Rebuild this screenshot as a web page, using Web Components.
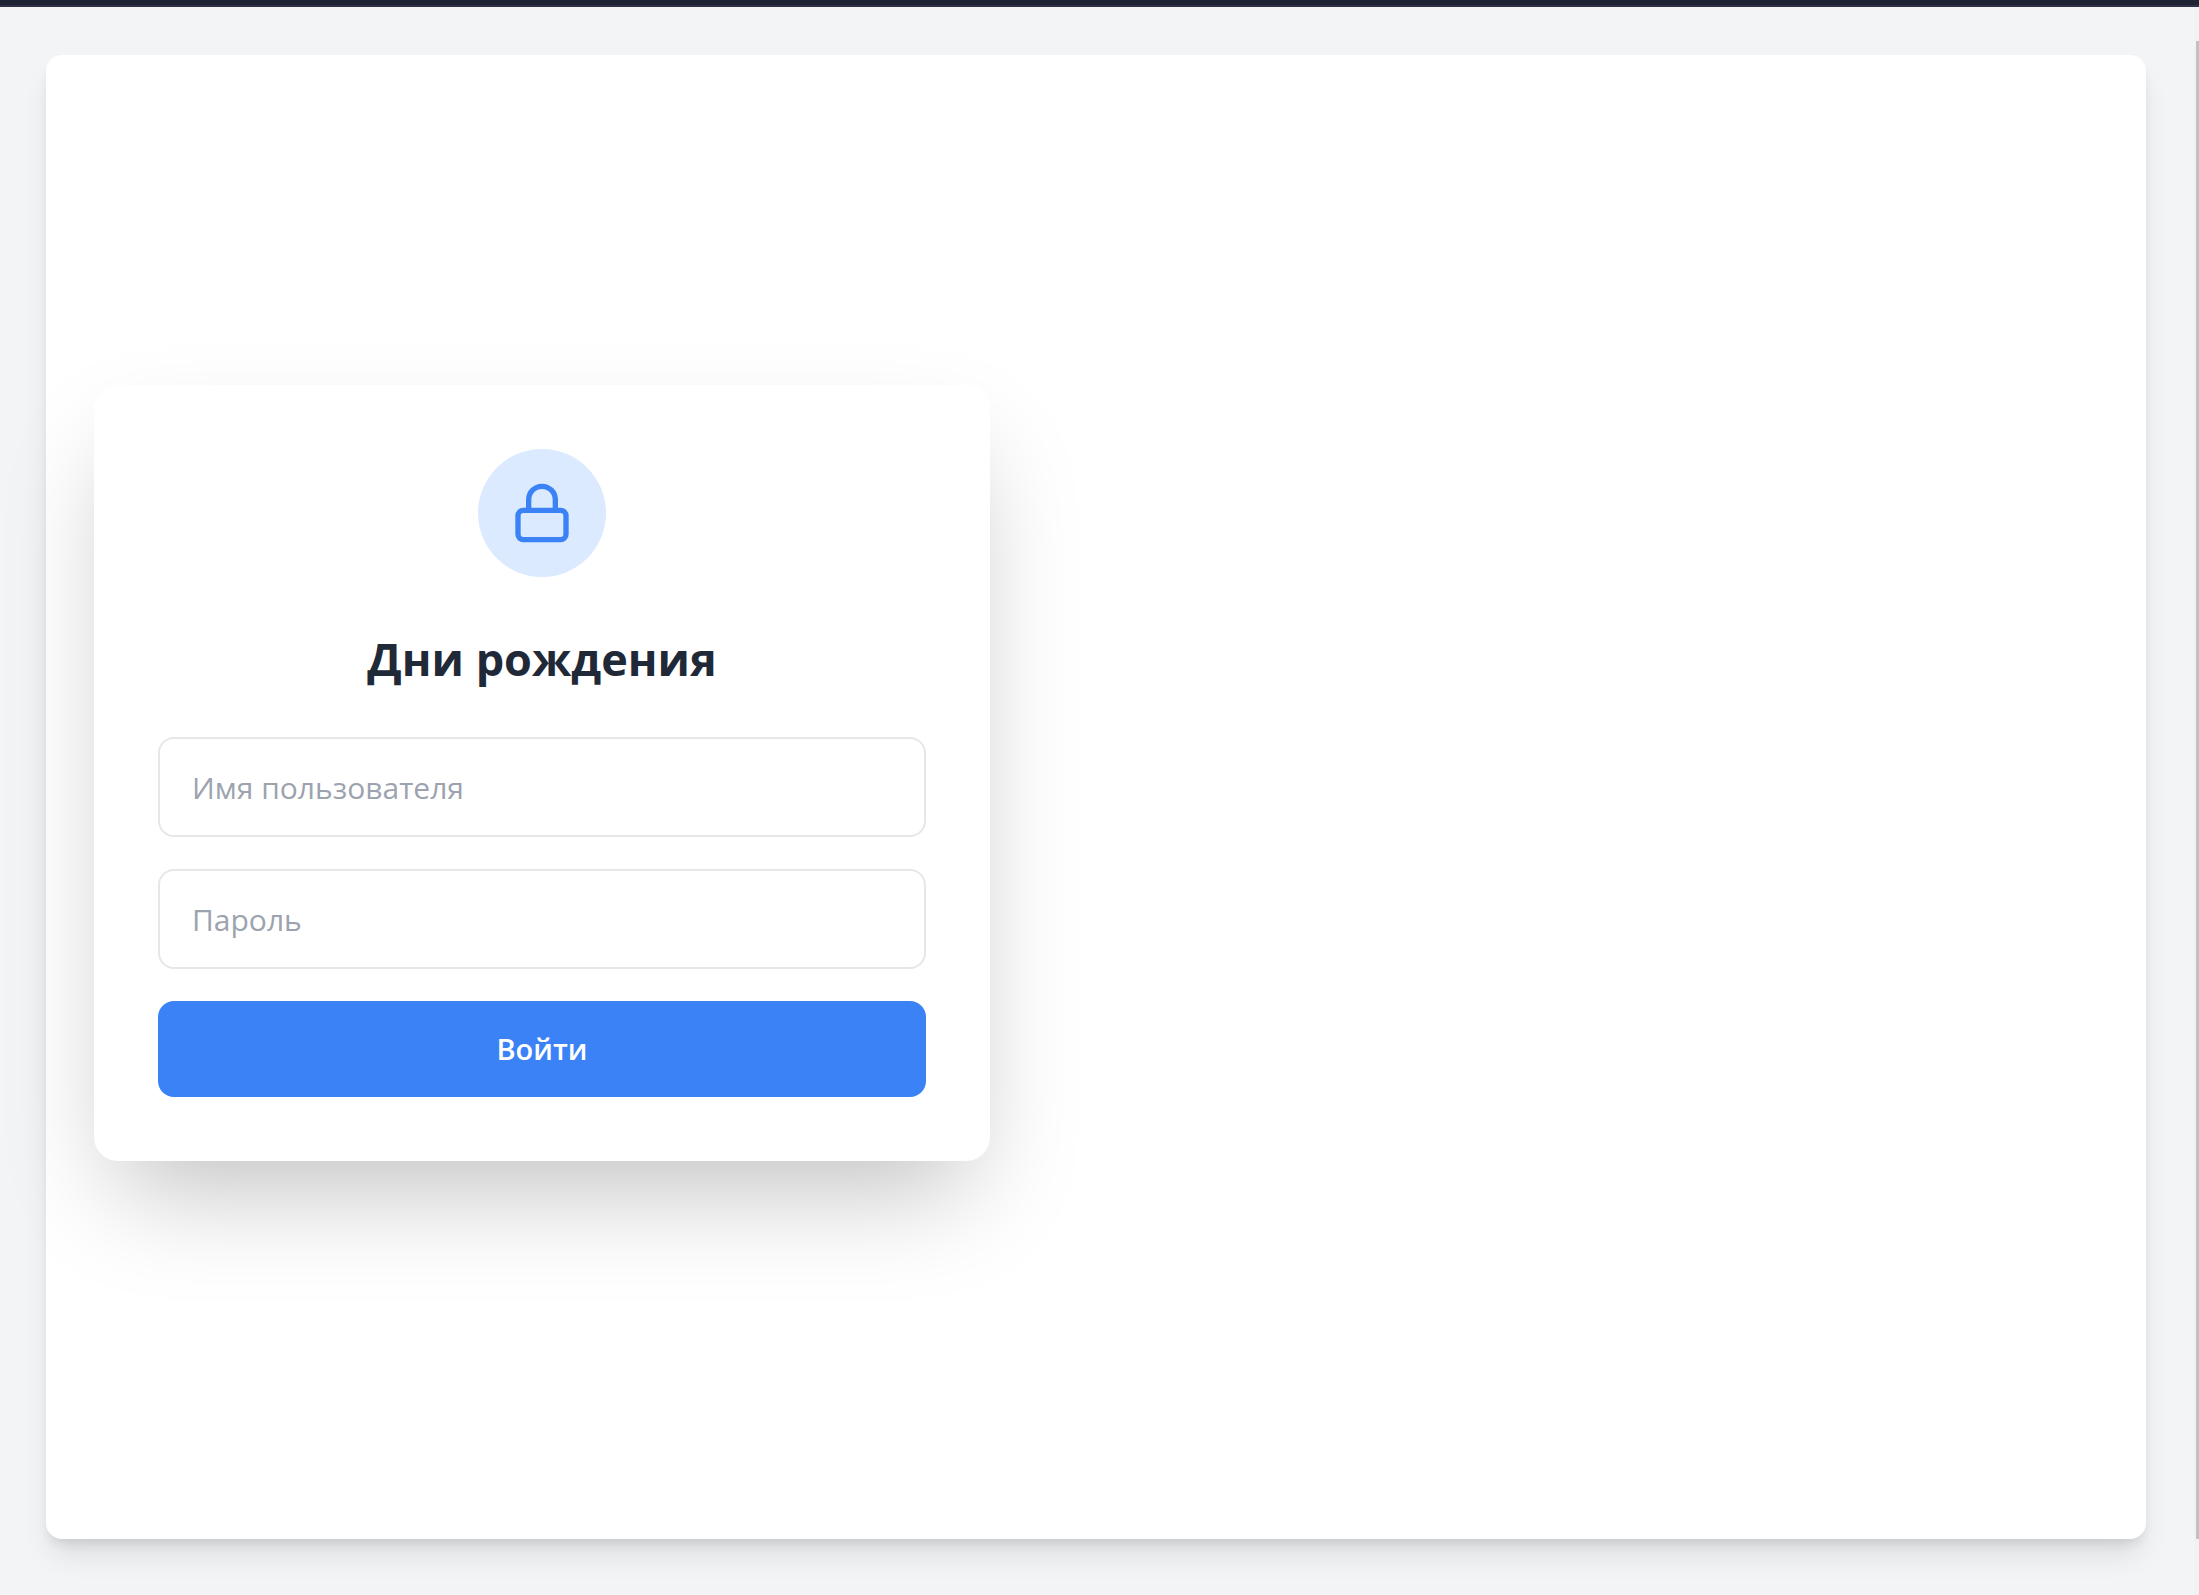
<!DOCTYPE html>
<html lang="ru">
<head>
<meta charset="utf-8">
<title>Дни рождения</title>
<style>
  html, body { margin: 0; height: 100%; }
  body { font-family: "Segoe UI", "Open Sans", "Noto Sans", sans-serif; color: #1f2937; }
</style>
</head>
<body>
<app-shell>
  <content-panel>
    <login-card heading="Дни рождения">
      <icon-badge slot="icon"></icon-badge>
      <text-field label="Имя пользователя" kind="text" complete="username"></text-field>
      <text-field label="Пароль" kind="password" complete="current-password"></text-field>
      <primary-button>Войти</primary-button>
    </login-card>
  </content-panel>
</app-shell>
<script>
  class BaseElement extends HTMLElement {
    constructor() {
      super();
      this.attachShadow({ mode: "open" });
    }
    connectedCallback() {
      this.shadowRoot.innerHTML = this.render();
    }
  }

  // Window frame: top strip, page area, scroll indicator
  class AppShell extends BaseElement {
    render() {
      return `
        <style>
          :host { display: flex; flex-direction: column; height: 100vh; background: #f3f4f6; overflow: hidden; }
          .strip { flex: none; height: 5px; background: #1e2433; border-bottom: 2px solid #2f3048; }
          .body { flex: 1; display: flex; min-height: 0; }
          main { flex: 1; display: flex; padding: 48px 48px 56px 46px; }
          .track { width: 5px; box-sizing: border-box; padding: 34px 0 56px 2px; background: #f1f2f3; display: flex; }
          .thumb { flex: 1; background: #c1c1c1; }
        </style>
        <div class="strip"></div>
        <div class="body">
          <main><slot></slot></main>
          <div class="track"><div class="thumb"></div></div>
        </div>`;
    }
  }

  class ContentPanel extends BaseElement {
    render() {
      return `
        <style>
          :host {
            display: flex; flex: 1; align-items: center; padding: 0 48px 48px;
            background: #fff; border-radius: 16px;
            box-shadow: 0 20px 30px -6px rgb(0 0 0 / .1), 0 8px 12px -4px rgb(0 0 0 / .1);
          }
        </style>
        <slot></slot>`;
    }
  }

  class LoginCard extends BaseElement {
    render() {
      return `
        <style>
          :host {
            display: block; box-sizing: border-box; width: 100%; max-width: 896px; padding: 64px;
            background: #fff; border-radius: 24px;
            box-shadow: 0 50px 100px -24px rgb(0 0 0 / .25);
          }
          .icon { display: flex; justify-content: center; margin-bottom: 48px; }
          h1 { margin: 0 0 44px; font-size: 45px; line-height: 68px; font-weight: 700; text-align: center; }
          form { display: flex; flex-direction: column; gap: 32px; }
        </style>
        <div class="icon"><slot name="icon"></slot></div>
        <h1>${this.getAttribute("heading")}</h1>
        <form><slot></slot></form>`;
    }
  }

  class IconBadge extends BaseElement {
    render() {
      return `
        <style>
          :host { display: flex; align-items: center; justify-content: center; width: 128px; height: 128px; border-radius: 50%; background: #dbeafe; }
          svg { width: 64px; height: 64px; }
        </style>
        <svg viewBox="0 0 24 24" fill="none" stroke="#3b82f6" stroke-width="2" stroke-linecap="round" stroke-linejoin="round" aria-hidden="true">
          <rect x="3" y="11" width="18" height="11" rx="2"/>
          <path d="M7 11V7a5 5 0 0 1 10 0v4"/>
        </svg>`;
    }
  }

  class TextField extends BaseElement {
    render() {
      const label = this.getAttribute("label");
      return `
        <style>
          :host { display: block; }
          input {
            display: block; box-sizing: border-box; width: 100%; height: 100px; padding: 0 32px;
            border: 2px solid #e5e7eb; border-radius: 16px; background: #fff;
            font: inherit; font-size: 30px; line-height: 48px; color: #1f2937; outline: none;
          }
          input::placeholder { color: #9ca3af; opacity: 1; }
          input:focus { border-color: #3b82f6; }
        </style>
        <input type="${this.getAttribute("kind")}" placeholder="${label}" aria-label="${label}" autocomplete="${this.getAttribute("complete")}">`;
    }
  }

  class PrimaryButton extends BaseElement {
    render() {
      return `
        <style>
          :host { display: block; }
          button {
            display: block; width: 100%; height: 96px; padding: 0 32px; border: 0; border-radius: 16px;
            background: #3b82f6; color: #fff; font: inherit; font-size: 29px; line-height: 48px; font-weight: 600; cursor: pointer;
          }
        </style>
        <button type="submit"><slot></slot></button>`;
    }
  }

  customElements.define("app-shell", AppShell);
  customElements.define("content-panel", ContentPanel);
  customElements.define("login-card", LoginCard);
  customElements.define("icon-badge", IconBadge);
  customElements.define("text-field", TextField);
  customElements.define("primary-button", PrimaryButton);
</script>
</body>
</html>
